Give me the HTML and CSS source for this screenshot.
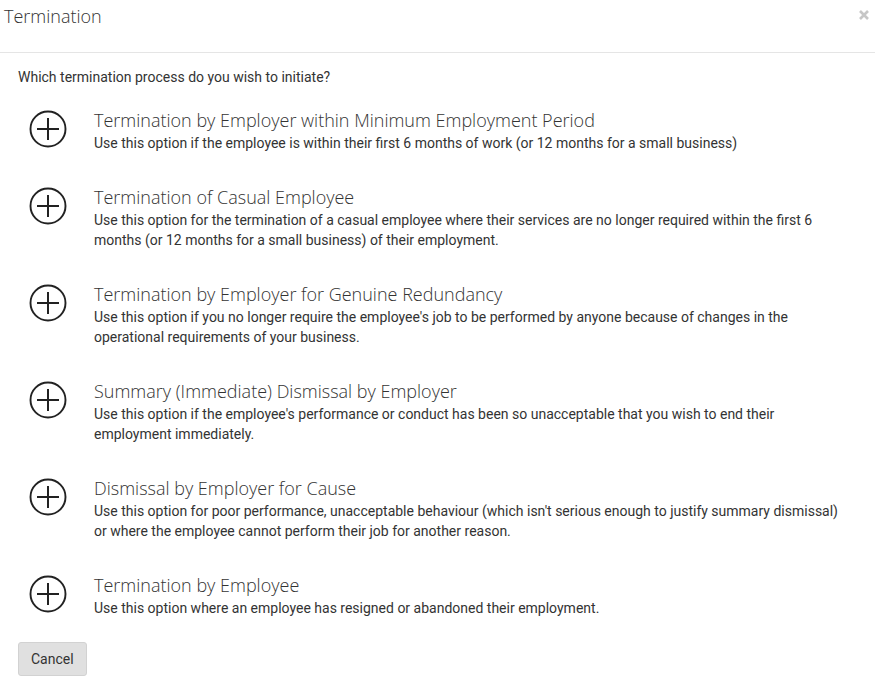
FILE: index.html
```html
<!DOCTYPE html>
<html lang="en">
<head>
  <meta charset="UTF-8" />
  <title>Termination</title>
  <link rel="stylesheet" href="styles.css">
</head>
<body>
  <div class="modal-header">
    <h1>Termination</h1>
    <button class="close" aria-label="Close">
      <svg width="10" height="10" viewBox="0 0 10 10">
        <path d="M1 1 L9 9 M9 1 L1 9" stroke="#c6c6c6" stroke-width="2.6" />
      </svg>
    </button>
  </div>

  <div class="modal-body">
    <p class="question">Which termination process do you wish to initiate?</p>

    <div class="option">
      <svg class="plus" width="40" height="40" viewBox="0 0 40 40">
        <circle cx="20" cy="20" r="17.5" fill="none" stroke="#222" stroke-width="1.9" />
        <path d="M9 20 H31 M20 9 V31" stroke="#222" stroke-width="2" />
      </svg>
      <div class="option-text">
        <h2>Termination by Employer within Minimum Employment Period</h2>
        <p>Use this option if the employee is within their first 6 months of work (or 12 months for a small business)</p>
      </div>
    </div>

    <div class="option">
      <svg class="plus" width="40" height="40" viewBox="0 0 40 40">
        <circle cx="20" cy="20" r="17.5" fill="none" stroke="#222" stroke-width="1.9" />
        <path d="M9 20 H31 M20 9 V31" stroke="#222" stroke-width="2" />
      </svg>
      <div class="option-text">
        <h2>Termination of Casual Employee</h2>
        <p>Use this option for the termination of a casual employee where their services are no longer required within the first 6 months (or 12 months for a small business) of their employment.</p>
      </div>
    </div>

    <div class="option">
      <svg class="plus" width="40" height="40" viewBox="0 0 40 40">
        <circle cx="20" cy="20" r="17.5" fill="none" stroke="#222" stroke-width="1.9" />
        <path d="M9 20 H31 M20 9 V31" stroke="#222" stroke-width="2" />
      </svg>
      <div class="option-text">
        <h2>Termination by Employer for Genuine Redundancy</h2>
        <p>Use this option if you no longer require the employee's job to be performed by anyone because of changes in the operational requirements of your business.</p>
      </div>
    </div>

    <div class="option">
      <svg class="plus" width="40" height="40" viewBox="0 0 40 40">
        <circle cx="20" cy="20" r="17.5" fill="none" stroke="#222" stroke-width="1.9" />
        <path d="M9 20 H31 M20 9 V31" stroke="#222" stroke-width="2" />
      </svg>
      <div class="option-text">
        <h2>Summary (Immediate) Dismissal by Employer</h2>
        <p>Use this option if the employee's performance or conduct has been so unacceptable that you wish to end their employment immediately.</p>
      </div>
    </div>

    <div class="option">
      <svg class="plus" width="40" height="40" viewBox="0 0 40 40">
        <circle cx="20" cy="20" r="17.5" fill="none" stroke="#222" stroke-width="1.9" />
        <path d="M9 20 H31 M20 9 V31" stroke="#222" stroke-width="2" />
      </svg>
      <div class="option-text">
        <h2>Dismissal by Employer for Cause</h2>
        <p>Use this option for poor performance, unacceptable behaviour (which isn't serious enough to justify summary dismissal) or where the employee cannot perform their job for another reason.</p>
      </div>
    </div>

    <div class="option">
      <svg class="plus" width="40" height="40" viewBox="0 0 40 40">
        <circle cx="20" cy="20" r="17.5" fill="none" stroke="#222" stroke-width="1.9" />
        <path d="M9 20 H31 M20 9 V31" stroke="#222" stroke-width="2" />
      </svg>
      <div class="option-text">
        <h2>Termination by Employee</h2>
        <p>Use this option where an employee has resigned or abandoned their employment.</p>
      </div>
    </div>

    <button class="cancel">Cancel</button>
  </div>
</body>
</html>
```

FILE: styles.css
```css
body {
  margin: 0;
  font-family: Roboto, "Liberation Sans", sans-serif;
  color: #333;
  background: #fff;
}

.modal-header {
  display: flex;
  justify-content: space-between;
  align-items: flex-start;
  height: 53px;
  box-sizing: border-box;
  border-bottom: 1px solid #e5e5e5;
  padding: 4px 6px 0 4px;
}

.modal-header h1 {
  margin: 0;
  font-family: "Open Sans", sans-serif;
  font-weight: 300;
  font-size: 18px;
  line-height: 24px;
  color: #333;
}

.close {
  background: none;
  border: none;
  padding: 0;
  margin-top: 4px;
  cursor: pointer;
}

.modal-body {
  padding: 15px 30px 0 18px;
}

.question {
  margin: 0 0 21px 0;
  font-size: 14px;
  line-height: 18px;
}

.option {
  display: flex;
  gap: 26px;
  padding-left: 10px;
  margin-bottom: 31px;
}

.plus {
  flex: none;
  margin-top: 2px;
  cursor: pointer;
}

.option-text h2 {
  margin: 0;
  font-family: "Open Sans", sans-serif;
  font-weight: 300;
  font-size: 18px;
  line-height: 26px;
  color: #333;
}

.option-text p {
  margin: 0;
  font-size: 14px;
  line-height: 20px;
  color: #333;
}

.cancel {
  display: block;
  margin-top: -7px;
  padding: 0 12px;
  height: 34px;
  font-family: Roboto, "Liberation Sans", sans-serif;
  font-size: 14px;
  color: #333;
  background: #e0e0e0;
  border: 1px solid #d2d2d2;
  border-radius: 3px;
  cursor: pointer;
}
```
